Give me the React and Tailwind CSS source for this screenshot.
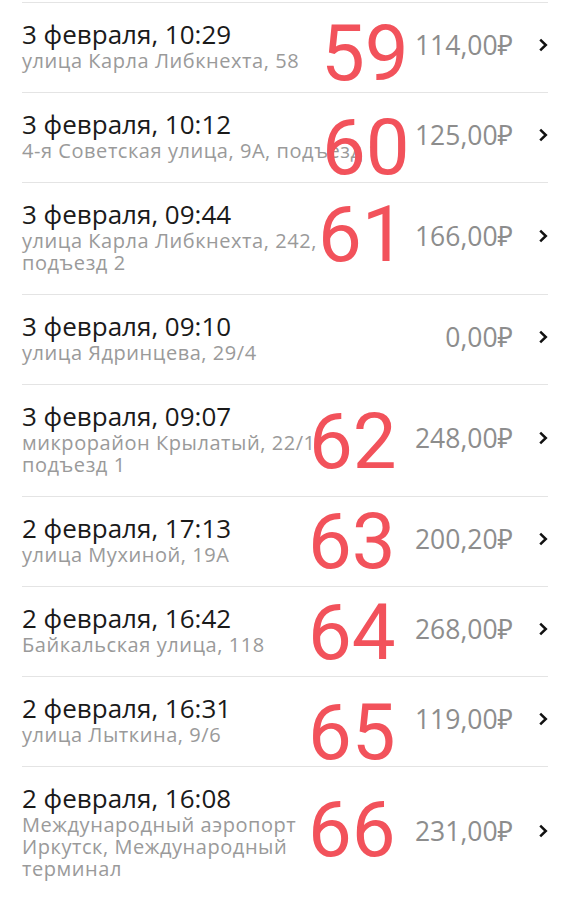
import React from "react";

const rides = [
  { title: "3 февраля, 10:29", sub: "улица Карла Либкнехта, 58", price: "114,00₽", num: "59", top: 12, left: 299 },
  { title: "3 февраля, 10:12", sub: "4-я Советская улица, 9А, подъезд 1", price: "125,00₽", num: "60", top: 16, left: 300, nowrap: true },
  { title: "3 февраля, 09:44", sub: "улица Карла Либкнехта, 242, подъезд 2", price: "166,00₽", num: "61", top: 13, left: 296 },
  { title: "3 февраля, 09:10", sub: "улица Ядринцева, 29/4", price: "0,00₽", num: null },
  { title: "3 февраля, 09:07", sub: "микрорайон Крылатый, 22/1, подъезд 1", price: "248,00₽", num: "62", top: 18, left: 287 },
  { title: "2 февраля, 17:13", sub: "улица Мухиной, 19А", price: "200,20₽", num: "63", top: 6, left: 286 },
  { title: "2 февраля, 16:42", sub: "Байкальская улица, 118", price: "268,00₽", num: "64", top: 7, left: 286 },
  { title: "2 февраля, 16:31", sub: "улица Лыткина, 9/6", price: "119,00₽", num: "65", top: 17, left: 286 },
  { title: "2 февраля, 16:08", sub: "Международный аэропорт Иркутск, Международный терминал", price: "231,00₽", num: "66", top: 24, left: 286 },
];

function Chevron() {
  return (
    <svg width="10" height="14" viewBox="0 0 10 14" className="shrink-0 ml-[25px]">
      <path d="M2.2 1.6 L7.8 7 L2.2 12.4" fill="none" stroke="#111" strokeWidth="2.5" strokeLinejoin="miter" />
    </svg>
  );
}

export default function App() {
  return (
    <div className="w-[570px] h-[902px] overflow-hidden bg-white pt-[2px]" style={{ fontFamily: '"Open Sans", "Noto Sans", sans-serif' }}>
      {rides.map((r, i) => (
        <div key={i} className="relative mx-[22px] border-t border-[#e4e4e4] flex items-center pt-[15px] pb-[20px]">
          <div className="w-[322px] shrink-0">
            <div className="text-[26px] leading-[32px] text-[#1a1a1a] whitespace-nowrap">{r.title}</div>
            <div className={"text-[20px] leading-[22px] tracking-[0.55px] text-[#9a9a9a]" + (r.nowrap ? " whitespace-nowrap" : "")}>{r.sub}</div>
          </div>
          <div className="flex-1" />
          <div className="text-[26.5px] leading-[32px] text-[#8d8d8d] whitespace-nowrap">{r.price}</div>
          <Chevron />
          {r.num && (
            <div
              className="absolute text-[78px] leading-[78px] text-[#f2525b]"
              style={{ top: r.top, left: r.left, fontFamily: "Roboto, sans-serif" }}
            >
              {r.num}
            </div>
          )}
        </div>
      ))}
    </div>
  );
}
